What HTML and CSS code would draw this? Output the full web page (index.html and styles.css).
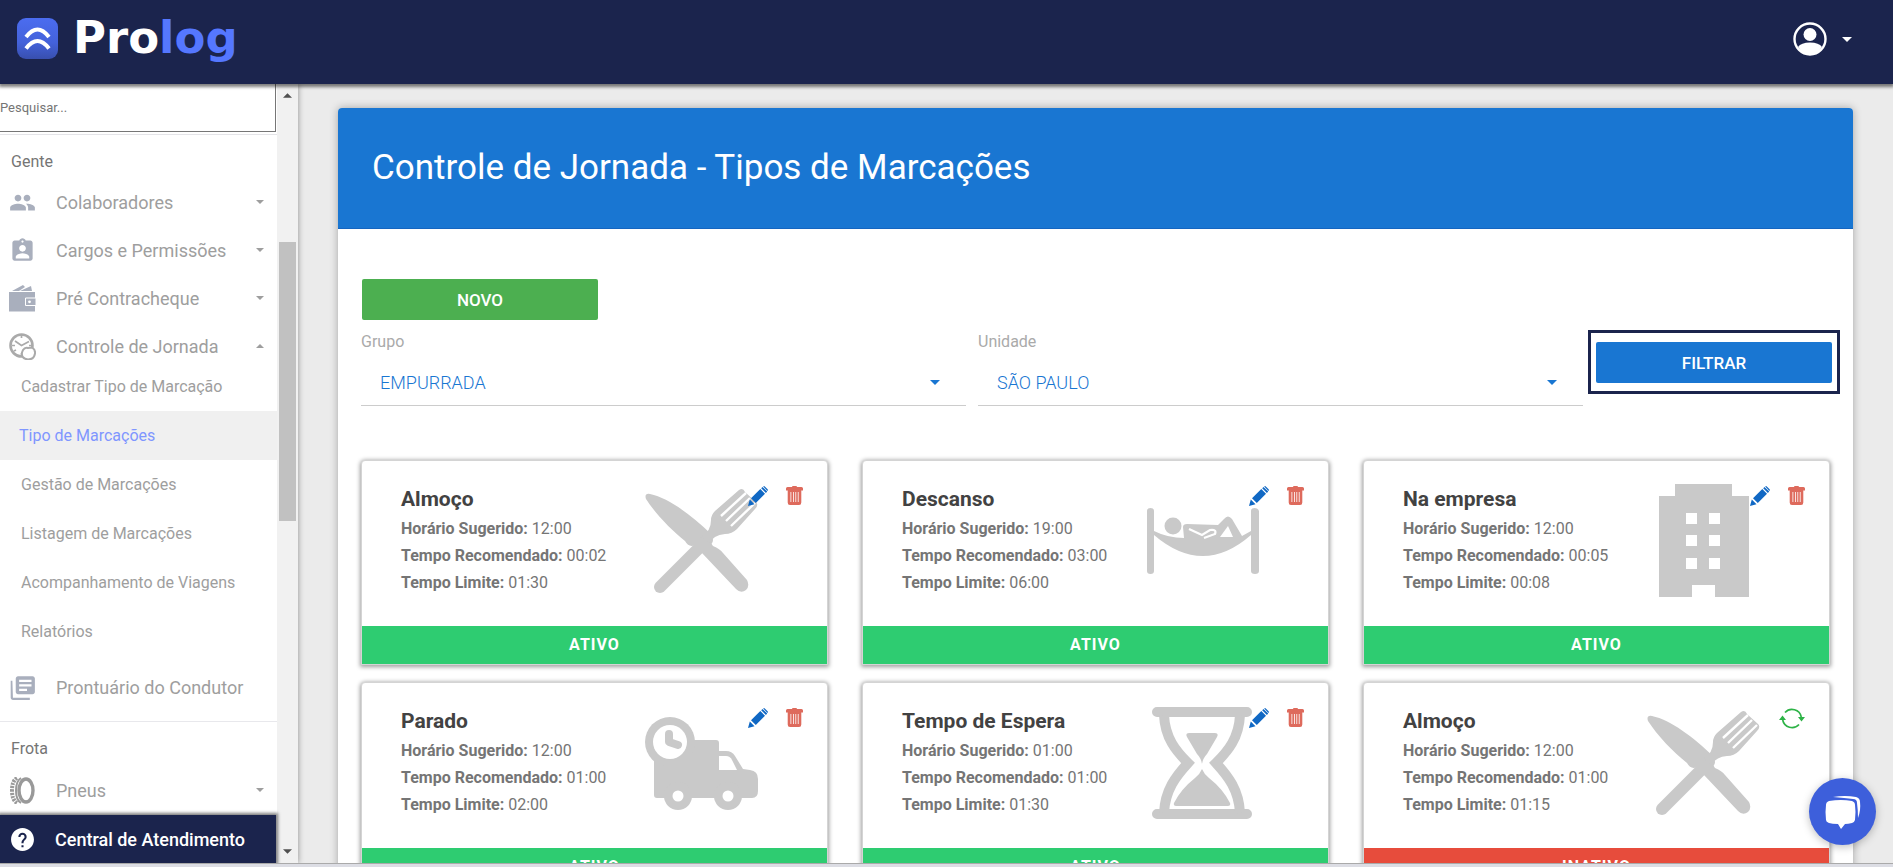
FILE: index.html
```html
<!DOCTYPE html>
<html lang="pt-BR">
<head>
<meta charset="utf-8">
<title>Prolog - Tipos de Marcações</title>
<link rel="stylesheet" href="styles.css">
</head>
<body>
<svg class="sprite" aria-hidden="true">
  <symbol id="caret" viewBox="0 0 10 5"><path d="M0 0h10L5 5z"/></symbol>
  <symbol id="pencil" viewBox="0 0 20 20"><path d="M0 20l1.800-6.500 4.700 4.700zM3 12.200L12.300 3l4.700 4.700L7.800 17zM13.200 2.200l1.300-1.300 4.700 4.700-1.300 1.300zM15.200 0.500q.8-.8 1.600 0l2.800 2.800q.7.800 0 1.500l-.2.200z"/></symbol>
  <symbol id="trash" viewBox="0 0 17 19"><path fill-rule="evenodd" d="M6 1q0-1 1-1h3q1 0 1 1h4.500Q17 1 17 2.500V4.500H15.300V16.500Q15.300 19 13 19H4Q1.700 19 1.700 16.500V4.500H0V2.500Q0 1 1.500 1zM4.500 6v10h.8V6zM7 6v10h.8V6zM9.400 6v10h.8V6zM11.800 6v10h.8V6z"/></symbol>
  <symbol id="refresh" viewBox="0 0 26 21"><path d="M6 4.500A9.500 9.500 0 0 1 22.300 9M20 16.500A9.500 9.500 0 0 1 3.700 12" fill="none" stroke="currentColor" stroke-width="1.700"/><path d="M19 9h7l-3.500 4.600zM0 12h7L3.500 7.400z"/></symbol>
  <symbol id="meal" viewBox="0 0 113 113"><path d="M1 15Q-1 9 5 10C24 14 46 31 66 50Q64 58 68 62Q75 65 78 69L102 96Q105 102 101 106Q96 110 91 105L57 69L50 61Q44 64 40 57C26 46 10 29 1 15z"/><path d="M15 103L62 56" fill="none" stroke="currentColor" stroke-width="12" stroke-linecap="round"/><path d="M57 52Q66 47 66 36Q66 31 70 27L94 6Q98 3 100 8L111 18Q114 21 110 25L92 45Q87 50 80 50Q68 51 64 60z"/><path d="M101 9L76 32M105 14L81 37M110 19L86 42" stroke="#fff" stroke-width="2.400"/></symbol>
  <symbol id="rest" viewBox="0 0 113 113"><path d="M1 27Q1 24 4.500 24T8 27V47Q22 54 38 54L37 43Q37 40 41 40L72 41L78 35Q82 30 86 35L96 52L105 47V27Q105 24 108.500 24T113 27V87Q113 90 109 90T105 87V51Q57 93 8 51V87Q8 90 4.500 90T1 87z"/><circle cx="27" cy="42" r="8.500"/><path d="M43 45L56 51L64 46Q71 45 69 50L58 54" fill="none" stroke="#fff" stroke-width="2.200"/><path d="M74 53L82 42L87 53z" fill="#fff"/></symbol>
  <symbol id="building" viewBox="0 0 113 113"><path fill-rule="evenodd" d="M28 0H85V12H102V113H68V101H45V113H12V12H28zM39 29V40H50V29zM62 29V40H73V29zM39 51V62H50V51zM62 51V62H73V51zM39 74V85H50V74zM62 74V85H73V74z"/></symbol>
  <symbol id="truck" viewBox="0 0 113 113"><path d="M9 50V89Q9 92 12 92H107Q113 92 113 85V73Q113 65 105 64L98 63L90 50Q87 45 81 45H74V37Q74 34 71 34H45z"/><path d="M74 50H81Q85 50 87 54L92 64H74z" fill="#fff"/><circle cx="25" cy="36" r="25"/><circle cx="25" cy="36" r="17" fill="#fff"/><path d="M24 28V36L33 39" fill="none" stroke="currentColor" stroke-width="8" stroke-linecap="round" stroke-linejoin="round"/><circle cx="33" cy="90" r="14"/><circle cx="83" cy="90" r="14"/><circle cx="33" cy="90" r="5.500" fill="#fff"/><circle cx="83" cy="90" r="5.500" fill="#fff"/></symbol>
  <symbol id="hourglass" viewBox="0 0 113 113"><path d="M11 6H101M11 108H101" stroke="currentColor" stroke-width="10" stroke-linecap="round"/><path d="M18 9C19 32 30 45 42 57C30 70 19 84 18 107M94 9C93 32 82 45 70 57C82 70 93 84 94 107" fill="none" stroke="currentColor" stroke-width="10"/><path d="M43 27H69Q73 27 71 31L61 48Q57 52 56 58Q55 52 51 48L41 31Q39 27 43 27zM56 63Q58 68 63 72Q77 83 84 97Q85 100 82 100H30Q27 100 28 97Q35 83 49 72Q54 68 56 63z"/></symbol>
</svg>

<header class="topbar">
  <a class="brand" href="#" aria-label="Prolog">
    <svg class="brand-mark" viewBox="0 0 41 41" aria-hidden="true">
      <defs><linearGradient id="mark" x1="0" y1="0" x2="0" y2="1"><stop offset="0" stop-color="#4b6cf0"/><stop offset=".6" stop-color="#4462da"/><stop offset="1" stop-color="#384fae"/></linearGradient></defs>
      <rect width="41" height="41" rx="9" fill="url(#mark)"/>
      <path d="M9 19Q20.500 4 32 19M9 30.500Q20.500 15.500 32 30.500" fill="none" stroke="#fff" stroke-width="4"/>
    </svg>
    <span class="brand-name">Pro<span class="brand-accent">log</span></span>
  </a>
  <button class="user" aria-label="Conta do usuário">
    <svg class="user-icon" viewBox="0 0 34 34" aria-hidden="true"><circle cx="17" cy="17" r="15.500" fill="none" stroke="#fff" stroke-width="2.400"/><circle cx="17" cy="12.500" r="6.500" fill="#fff"/><path d="M5 25Q8 20.500 17 20.500T29 25Q24 33 17 33T5 25z" fill="#fff"/></svg>
    <svg class="caret" aria-hidden="true"><use href="#caret"/></svg>
  </button>
</header>

<div class="shell">
  <aside class="sidebar">
    <div class="sidebar-main">
      <nav class="menu">
        <div class="search"><input class="search-input" type="text" placeholder="Pesquisar..." aria-label="Pesquisar"></div>
        <h2 class="menu-heading">Gente</h2>
        <a class="menu-item" href="#">
          <svg class="menu-icon" viewBox="0 0 24 24"><path d="M16 11c1.660 0 2.990-1.340 2.990-3S17.660 5 16 5s-3 1.340-3 3 1.340 3 3 3zm-8 0c1.660 0 2.990-1.340 2.990-3S9.660 5 8 5 5 6.340 5 8s1.340 3 3 3zm0 2c-2.330 0-7 1.170-7 3.500V19h14v-2.500c0-2.330-4.670-3.500-7-3.500zm8 0c-.29 0-.62.020-.97.050 1.160.84 1.970 1.970 1.970 3.450V19h6v-2.500c0-2.330-4.670-3.500-7-3.500z"/></svg>
          <span class="menu-label">Colaboradores</span><svg class="menu-caret"><use href="#caret"/></svg></a>
        <a class="menu-item" href="#">
          <svg class="menu-icon" viewBox="0 0 24 24"><path d="M19 3h-4.180C14.400 1.840 13.300 1 12 1c-1.300 0-2.400.84-2.820 2H5c-1.100 0-2 .9-2 2v14c0 1.100.9 2 2 2h14c1.100 0 2-.9 2-2V5c0-1.100-.9-2-2-2zm-7 0c.55 0 1 .45 1 1s-.45 1-1 1-1-.45-1-1 .45-1 1-1zm0 4c1.660 0 3 1.340 3 3s-1.340 3-3 3-3-1.340-3-3 1.340-3 3-3zm6 12H6v-1.400c0-2 4-3.100 6-3.100s6 1.100 6 3.100V19z"/></svg>
          <span class="menu-label">Cargos e Permissões</span><svg class="menu-caret"><use href="#caret"/></svg></a>
        <a class="menu-item" href="#">
          <svg class="menu-icon" viewBox="0 0 27 27"><path d="M0 7H26V26.500H0z"/><path d="M16.500 13H27V20.500H16.500z" stroke="#fff"/><path d="M3 6L14 0l2 2-6 4zM11 6l11-5 1 5z"/><circle cx="20.500" cy="16.800" r="1.400" fill="#fff"/></svg>
          <span class="menu-label">Pré Contracheque</span><svg class="menu-caret"><use href="#caret"/></svg></a>
        <a class="menu-item" href="#">
          <svg class="menu-icon menu-icon-gray" viewBox="0 0 27 27"><circle cx="12.500" cy="12.500" r="11" fill="none" stroke="currentColor" stroke-width="2.600"/><path d="M6 8l6.500 4.500L20 8.500M12.500 2v3M3 12.500h3M5 18l2-1M12.500 23v-3M20 12.500h3" fill="none" stroke="currentColor" stroke-width="1.700"/><path d="M14 17q2-3 5-2l4-.5q3.500 2 3 6-1 6-7 6-7-1-6-7z" fill="#fff" stroke="currentColor" stroke-width="2"/></svg>
          <span class="menu-label">Controle de Jornada</span><svg class="menu-caret menu-caret-open"><use href="#caret"/></svg></a>
        <ul class="submenu">
          <li><a class="submenu-item" href="#">Cadastrar Tipo de Marcação</a></li>
          <li><a class="submenu-item submenu-active" href="#">Tipo de Marcações</a></li>
          <li><a class="submenu-item" href="#">Gestão de Marcações</a></li>
          <li><a class="submenu-item" href="#">Listagem de Marcações</a></li>
          <li><a class="submenu-item" href="#">Acompanhamento de Viagens</a></li>
          <li><a class="submenu-item" href="#">Relatórios</a></li>
        </ul>
        <a class="menu-item menu-last" href="#">
          <svg class="menu-icon" viewBox="0 0 24 24"><path d="M3 6H1.500v15c0 1.100.9 2 2 2h15v-2H3.500zM21 2H8c-1.100 0-2 .9-2 2v12c0 1.100.9 2 2 2h13c1.100 0 2-.9 2-2V4c0-1.100-.9-2-2-2zM20 11H9V9h11zM16 15H9v-2h7zM20 7H9V5h11z"/></svg>
          <span class="menu-label">Prontuário do Condutor</span></a>
        <h2 class="menu-heading menu-heading-next">Frota</h2>
        <a class="menu-item" href="#">
          <svg class="menu-icon menu-icon-dark" viewBox="0 0 27 27"><ellipse cx="17" cy="13.500" rx="7" ry="11.500" fill="none" stroke="currentColor" stroke-width="3.400"/><path d="M12 1q-5 3-5 12.500T12 26" fill="none" stroke="currentColor" stroke-width="2"/><path d="M8 1q-5 3-5 12.500T8 26" fill="none" stroke="currentColor" stroke-width="4" stroke-dasharray="2.200 1"/></svg>
          <span class="menu-label">Pneus</span><svg class="menu-caret"><use href="#caret"/></svg></a>
      </nav>
      <a class="support" href="#">
        <svg class="support-icon" viewBox="0 0 24 24"><path d="M12 1C5.900 1 1 5.900 1 12s4.900 11 11 11 11-4.900 11-11S18.100 1 12 1zm1 18.500h-2v-2h2zm2.100-7.800l-.9.900C13.400 13.400 13 14 13 15.500h-2V15c0-1.100.4-2.100 1.200-2.800l1.200-1.300c.4-.3.600-.8.600-1.400a2 2 0 0 0-4 0H8a4 4 0 0 1 8 0c0 .9-.4 1.700-.9 2.200z" fill="#fff"/></svg>
        <span class="menu-label">Central de Atendimento</span></a>
    </div>
    <div class="scroll" aria-hidden="true">
      <svg class="scroll-arrow scroll-up"><use href="#caret"/></svg>
      <div class="scroll-track"><div class="scroll-thumb"></div></div>
      <svg class="scroll-arrow"><use href="#caret"/></svg>
    </div>
  </aside>

  <main class="content">
    <section class="panel">
      <div class="panel-head"><h1 class="panel-title">Controle de Jornada - Tipos de Marcações</h1></div>
      <div class="panel-body">
        <button class="btn btn-new">NOVO</button>
        <form class="filters">
          <div class="field"><label class="field-label" for="grupo">Grupo</label>
            <div class="field-box"><select class="field-select" id="grupo"><option>EMPURRADA</option></select><svg class="caret field-caret"><use href="#caret"/></svg></div></div>
          <div class="field"><label class="field-label" for="unidade">Unidade</label>
            <div class="field-box"><select class="field-select" id="unidade"><option>SÃO PAULO</option></select><svg class="caret field-caret"><use href="#caret"/></svg></div></div>
          <div class="filter-action"><button class="btn btn-filter" type="button">FILTRAR</button></div>
        </form>
        <div class="cards">
          <article class="card">
            <div class="card-body">
              <div class="card-info"><h3 class="card-title">Almoço</h3><p><b>Horário Sugerido:</b> 12:00</p><p><b>Tempo Recomendado:</b> 00:02</p><p><b>Tempo Limite:</b> 01:30</p></div>
              <svg class="card-art"><use href="#meal"/></svg>
              <div class="card-actions"><button class="act act-edit" aria-label="Editar"><svg><use href="#pencil"/></svg></button><button class="act act-del" aria-label="Excluir"><svg><use href="#trash"/></svg></button></div>
            </div><div class="status">ATIVO</div>
          </article>
          <article class="card">
            <div class="card-body">
              <div class="card-info"><h3 class="card-title">Descanso</h3><p><b>Horário Sugerido:</b> 19:00</p><p><b>Tempo Recomendado:</b> 03:00</p><p><b>Tempo Limite:</b> 06:00</p></div>
              <svg class="card-art"><use href="#rest"/></svg>
              <div class="card-actions"><button class="act act-edit" aria-label="Editar"><svg><use href="#pencil"/></svg></button><button class="act act-del" aria-label="Excluir"><svg><use href="#trash"/></svg></button></div>
            </div><div class="status">ATIVO</div>
          </article>
          <article class="card">
            <div class="card-body">
              <div class="card-info"><h3 class="card-title">Na empresa</h3><p><b>Horário Sugerido:</b> 12:00</p><p><b>Tempo Recomendado:</b> 00:05</p><p><b>Tempo Limite:</b> 00:08</p></div>
              <svg class="card-art"><use href="#building"/></svg>
              <div class="card-actions"><button class="act act-edit" aria-label="Editar"><svg><use href="#pencil"/></svg></button><button class="act act-del" aria-label="Excluir"><svg><use href="#trash"/></svg></button></div>
            </div><div class="status">ATIVO</div>
          </article>
          <article class="card">
            <div class="card-body">
              <div class="card-info"><h3 class="card-title">Parado</h3><p><b>Horário Sugerido:</b> 12:00</p><p><b>Tempo Recomendado:</b> 01:00</p><p><b>Tempo Limite:</b> 02:00</p></div>
              <svg class="card-art"><use href="#truck"/></svg>
              <div class="card-actions"><button class="act act-edit" aria-label="Editar"><svg><use href="#pencil"/></svg></button><button class="act act-del" aria-label="Excluir"><svg><use href="#trash"/></svg></button></div>
            </div><div class="status">ATIVO</div>
          </article>
          <article class="card">
            <div class="card-body">
              <div class="card-info"><h3 class="card-title">Tempo de Espera</h3><p><b>Horário Sugerido:</b> 01:00</p><p><b>Tempo Recomendado:</b> 01:00</p><p><b>Tempo Limite:</b> 01:30</p></div>
              <svg class="card-art"><use href="#hourglass"/></svg>
              <div class="card-actions"><button class="act act-edit" aria-label="Editar"><svg><use href="#pencil"/></svg></button><button class="act act-del" aria-label="Excluir"><svg><use href="#trash"/></svg></button></div>
            </div><div class="status">ATIVO</div>
          </article>
          <article class="card">
            <div class="card-body">
              <div class="card-info"><h3 class="card-title">Almoço</h3><p><b>Horário Sugerido:</b> 12:00</p><p><b>Tempo Recomendado:</b> 01:00</p><p><b>Tempo Limite:</b> 01:15</p></div>
              <svg class="card-art"><use href="#meal"/></svg>
              <div class="card-actions"><button class="act act-restore" aria-label="Reativar"><svg><use href="#refresh"/></svg></button></div>
            </div><div class="status status-off">INATIVO</div>
          </article>
        </div>
      </div>
    </section>
  </main>
</div>
<div class="edge"></div>
<button class="chat" aria-label="Abrir chat">
  <svg class="chat-icon" viewBox="0 0 36 36" aria-hidden="true"><path d="M4 7Q16 5 27 7Q30 8 30 11Q31 18 30 26Q29 29 27 29Q23 30 20 30L16 35L13 30Q7 30 4 29Q1 28 1 26Q0 18 1 11Q1 8 4 7z"/><path d="M8 3Q20 1 31 3Q35 4 35 8Q36 16 33 24Q33 16 32 9Q32 5 28 5Q20 4 8 3z"/></svg>
</button>
</body>
</html>
```
FILE: styles.css
```css
* { box-sizing: border-box; }

body {
  margin: 0;
  height: 100vh;
  display: flex;
  flex-direction: column;
  overflow: hidden;
  font-family: Roboto, "Liberation Sans", sans-serif;
  font-size: 16px;
  background: #ebebeb;
}

h1, h2, h3, p, ul { margin: 0; padding: 0; }
ul { list-style: none; }
a { text-decoration: none; color: inherit; }
button { border: 0; padding: 0; background: none; font-family: inherit; cursor: pointer; }
.sprite { display: none; }

/* Top bar */
.topbar {
  flex: none;
  height: 84px;
  display: flex;
  justify-content: space-between;
  align-items: center;
  padding: 0 41px 8px 17px;
  background: #1b244d;
  box-shadow: 0 2px 3px 1px rgba(0, 0, 0, .5);
  z-index: 2;
}
.brand { display: flex; align-items: center; gap: 15px; }
.brand-mark { width: 41px; height: 41px; }
.brand-name {
  font: bold 45px/48px "DejaVu Sans", sans-serif;
  color: #fff;
}
.brand-accent { color: #5577ff; }
.user { display: flex; align-items: center; gap: 15px; padding-top: 2px; color: #fff; }
.user-icon { width: 34px; height: 34px; }
.caret { width: 10px; height: 5px; fill: currentColor; }

.shell { flex: 1; min-height: 0; display: flex; }

/* Sidebar */
.sidebar {
  flex: none;
  width: 298px;
  display: flex;
  background: #fff;
  box-shadow: 0 0 6px rgba(0, 0, 0, .4);
}
.sidebar-main { flex: 1; min-width: 0; display: flex; flex-direction: column; }
.menu { flex: 1; min-height: 0; overflow: hidden; }
.search { padding-bottom: 2px; border-bottom: 1px solid #e4e4e8; }
.search-input {
  display: block;
  width: 276px;
  height: 48px;
  border: solid #767676;
  border-width: 0 1px 1px 0;
  padding: 0;
  font: 13px Roboto, sans-serif;
  color: #757575;
}
.search-input::placeholder { color: #757575; }
.menu-heading {
  padding: 15px 11px 4px;
  font-size: 16px;
  line-height: 24px;
  font-weight: 400;
  color: #757575;
}
.menu-item {
  display: flex;
  align-items: center;
  height: 48px;
  padding: 0 13px 0 9px;
  font-size: 18px;
  color: #9e9e9e;
}
.menu-icon { width: 27px; height: 27px; flex: none; color: #a9afbd; fill: currentColor; }
.menu-icon-gray { color: #aaa; }
.menu-icon-dark { color: #999; }
.menu-label { flex: 1; padding-left: 20px; }
.menu-caret { width: 8px; height: 4px; fill: #9e9e9e; }
.menu-caret-open { transform: rotate(180deg); }
.submenu-item {
  display: flex;
  align-items: center;
  height: 49px;
  padding: 0 21px;
  font-size: 16px;
  color: #9e9e9e;
}
.submenu { margin-top: -8px; }
.submenu-active { padding: 0 19px; background: #f0f0f0; color: #7f96ff; }
.menu-last { margin-top: 7px; }
.menu-heading-next { margin-top: 10px; border-top: 1px solid #e8e8ec; padding-top: 15px; padding-bottom: 5px; }
.support {
  flex: none;
  display: flex;
  align-items: center;
  height: 48px;
  margin-right: 1px;
  padding-left: 10px;
  background: #1b244d;
  color: #fff;
  font-size: 18px;
  font-weight: 500;
  box-shadow: 0 0 3px 2px rgba(0, 0, 0, .5);
  z-index: 1;
}
.support-icon { width: 25px; height: 25px; }
.scroll {
  width: 21px;
  display: flex;
  flex-direction: column;
  align-items: center;
  padding: 9px 0;
  background: #f1f1f1;
}
.scroll-arrow { width: 9px; height: 5px; fill: #505050; }
.scroll-up { transform: rotate(180deg); }
.scroll-track { flex: 1; width: 17px; padding-top: 144px; }
.scroll-thumb { height: 46%; background: #c1c1c1; }

/* Panel */
.content { flex: 1; min-width: 0; overflow: hidden; padding: 24px 40px 0; }
.panel { background: #fff; border-radius: 4px 4px 0 0; box-shadow: 0 0 8px rgba(0, 0, 0, .3); }
.panel-head {
  padding: 35px 34px;
  background: #1976d2;
  border-bottom: 1px solid #1565c0;
  border-radius: 4px 4px 0 0;
  color: #fff;
}
.panel-title { font-size: 35px; line-height: 50px; font-weight: 400; }
.panel-body { padding: 50px 23px 24px; }
.btn {
  width: 236px;
  height: 41px;
  border-radius: 2px;
  color: #fff;
  font-size: 17px;
  font-weight: 500;
}
.btn-new { display: block; margin-left: 1px; background: #4caf50; }
.btn-filter { background: #1976d2; }
.filters { display: flex; gap: 12px; margin: 10px -10px 0 0; align-items: flex-start; }
.field { flex: 1; min-width: 0; }
.field-label { display: block; line-height: 24px; color: #aaa; }
.field-box { display: flex; align-items: center; border-bottom: 1px solid #ccc; color: #1976d2; }
.field-select {
  flex: 1;
  height: 51px;
  margin-right: -36px;
  padding: 6px 36px 0 19px;
  border: 0;
  appearance: none;
  background: transparent;
  font: 300 18px Roboto, sans-serif;
  color: #1976d2;
}
.field-caret { margin: 6px 26px 0 0; pointer-events: none; }
.filter-action { margin-left: -7px; padding: 9px 5px 8px; border: 3px solid #1b244d; }
.btn-filter { display: block; }

/* Cards */
.cards { display: grid; grid-template-columns: repeat(3, 1fr); gap: 17px 34px; margin-top: 54px; }
.card {
  border: 1px solid #d4d4d4;
  border-radius: 4px 4px 0 0;
  background: #fff;
  box-shadow: 0 1px 4px 1px rgba(0, 0, 0, .38);
}
.card-body { position: relative; display: flex; justify-content: space-between; padding: 23px 69px 29px 39px; }
.card-info { line-height: 27px; color: #757575; }
.card-info b { font-weight: 700; }
.card-title { font-size: 21px; line-height: 31px; font-weight: 700; color: #424242; }
.card-art { width: 113px; height: 113px; color: #c9c9c9; fill: currentColor; }
.card-actions { position: absolute; top: 25px; right: 24px; display: flex; gap: 18px; }
.act svg { display: block; width: 100%; height: 100%; fill: currentColor; }
.act-edit { width: 20px; height: 20px; color: #1068c4; }
.act-del { width: 17px; height: 19px; color: #de6a5c; }
.act-restore { width: 26px; height: 21px; color: #2eb347; }
.status {
  line-height: 38px;
  text-align: center;
  background: #2ecc71;
  color: #fff;
  font-weight: 700;
  letter-spacing: 1px;
}
.status-off { background: #e74c3c; }

.edge { flex: none; height: 4px; border-top: 1px solid #aaa; background: #dcdde4; z-index: 2; }

.chat {
  position: fixed;
  right: 17px;
  bottom: 22px;
  width: 67px;
  height: 67px;
  display: grid;
  place-items: center;
  border-radius: 50%;
  background: #3d5fdb;
  box-shadow: 0 2px 8px rgba(0, 0, 0, .25);
  z-index: 3;
}
.chat-icon { width: 36px; height: 36px; fill: #fff; }
```
